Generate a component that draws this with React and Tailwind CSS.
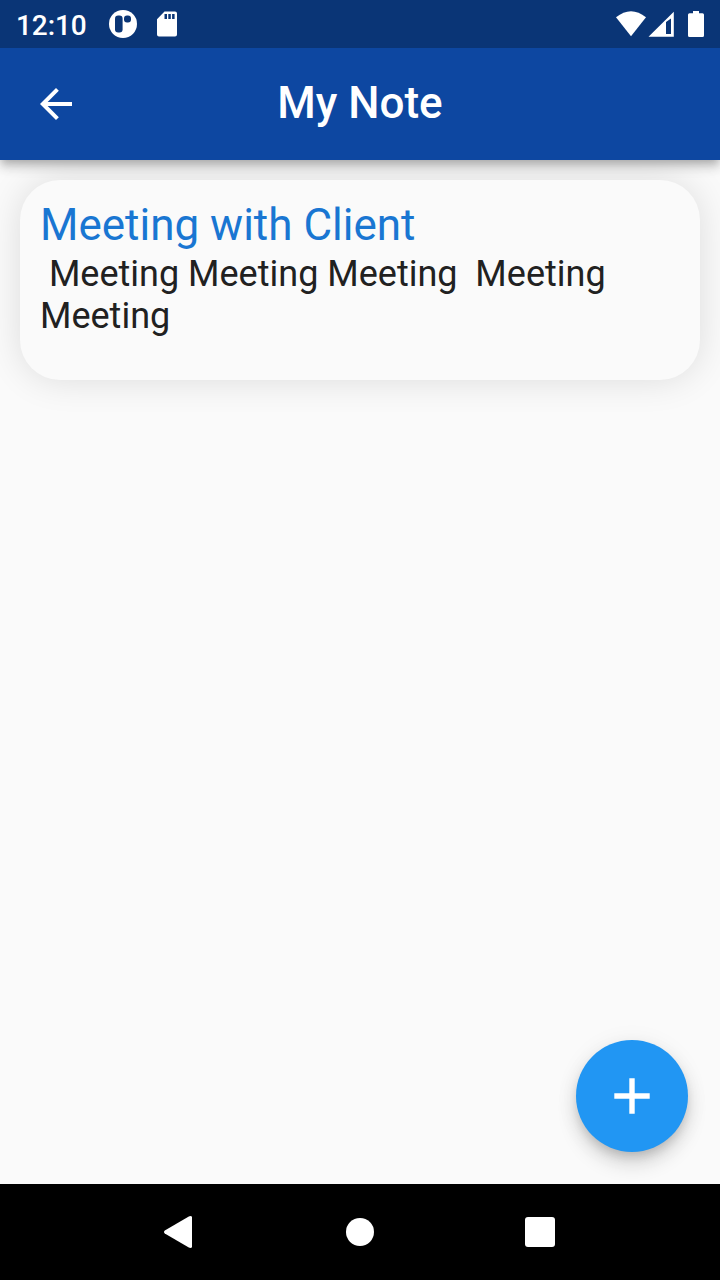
function StatusBar() {
  return (
    <div className="z-20 flex h-12 shrink-0 items-center bg-[#0a3576] pl-4 text-white">
      <span className="w-[92px] pt-[3px] text-[28px] leading-8 font-medium tracking-[-0.1px]">12:10</span>
      <svg className="h-12 w-[72px]" viewBox="108 0 72 48" fill="white">
        <circle cx="123" cy="24" r="14" />
        <rect x="115" y="15.5" width="7.6" height="17" rx="3.2" fill="#0a3576" />
        <rect x="124" y="15.5" width="7" height="7" rx="3" fill="#0a3576" />
        <path
          fillRule="evenodd"
          d="M164.500 11.500H175q2 0 2 2V34.500q0 2-2 2H159q-2 0-2-2V19.200ZM164.500 14V19H167V14ZM168.300 14V19H170.800V14ZM172.100 14V19H174.600V14Z"
        />
      </svg>
      <svg className="ml-auto h-12 w-[112px]" viewBox="608 0 112 48" fill="white">
        <path d="M616 17.300Q631 5.300 646 17.300L631 36.300Z" />
        <path fillRule="evenodd" d="M648.500 36.800L673.800 11.700V36.800ZM666 22V34H671V18.500Z" />
        <path d="M693 11H699V13.200H702.500Q704 13.200 704 14.700V35.500Q704 37 702.500 37H689.500Q688 37 688 35.500V14.700Q688 13.200 689.500 13.200H693Z" />
      </svg>
    </div>
  );
}

function AppBar() {
  return (
    <header className="z-10 grid h-28 shrink-0 grid-cols-[112px_1fr_112px] items-center bg-[#0d47a1] text-white shadow-[0_4px_8px_-2px_rgba(0,0,0,0.2),0_8px_10px_rgba(0,0,0,0.14),0_2px_20px_rgba(0,0,0,0.06)]">
      <button aria-label="Back" className="flex h-28 items-center justify-center">
        <svg className="size-12" viewBox="0 0 24 24" fill="white">
          <path d="M20 11H7.830l5.590-5.590L12 4l-8 8 8 8 1.410-1.410L7.830 13H20v-2z" />
        </svg>
      </button>
      <h1 className="pb-0.5 text-center text-[44px] leading-[52px] font-medium whitespace-nowrap">
        My Note
      </h1>
    </header>
  );
}

function NoteCard({ title, body }) {
  return (
    <article className="h-[200px] rounded-[40px] bg-[#fafafa] p-5 shadow-[0_0_36px_rgba(0,0,0,0.12)]">
      <h2 className="mb-[3px] text-[44px] leading-[50px] text-[#1976d2]">{title}</h2>
      <p className="text-[36px] leading-[42px] whitespace-pre-wrap text-[#212121]">{body}</p>
    </article>
  );
}

function NavigationBar() {
  return (
    <nav className="grid h-24 shrink-0 grid-cols-3 bg-black px-[90px]">
      <button aria-label="Back" className="flex items-center justify-center">
        <svg className="h-8 w-9" viewBox="0 0 36 32" fill="white">
          <path d="M2.800 14.500L26.800.500Q28.800-.500 30 .800V31.200Q28.800 32.500 26.800 31.500L2.800 17.500Q1.200 16 2.800 14.500Z" />
        </svg>
      </button>
      <button aria-label="Home" className="flex items-center justify-center">
        <span className="size-7 rounded-full bg-white" />
      </button>
      <button aria-label="Recent apps" className="flex items-center justify-center">
        <span className="size-[30px] rounded-[3px] bg-white" />
      </button>
    </nav>
  );
}

export default function App() {
  return (
    <div className="flex h-[1280px] w-[720px] flex-col overflow-hidden bg-[#fafafa] font-['Roboto',sans-serif]">
      <StatusBar />
      <AppBar />
      <main className="flex flex-1 flex-col justify-between p-5">
        <NoteCard
          title="Meeting with Client"
          body={" Meeting Meeting Meeting  Meeting Meeting"}
        />
        <button
          aria-label="Add note"
          className="mr-3 mb-3 flex size-28 items-center justify-center self-end rounded-full bg-[#2196f3] shadow-[0_6px_10px_-2px_rgba(0,0,0,0.14),0_12px_20px_rgba(0,0,0,0.14),0_2px_24px_rgba(0,0,0,0.06)]"
        >
          <svg className="size-9" viewBox="0 0 36 36" fill="white">
            <path d="M15.300.300H20.700V15.300H35.700V20.700H20.700V35.700H15.300V20.700H.300V15.300H15.300Z" />
          </svg>
        </button>
      </main>
      <NavigationBar />
    </div>
  );
}
